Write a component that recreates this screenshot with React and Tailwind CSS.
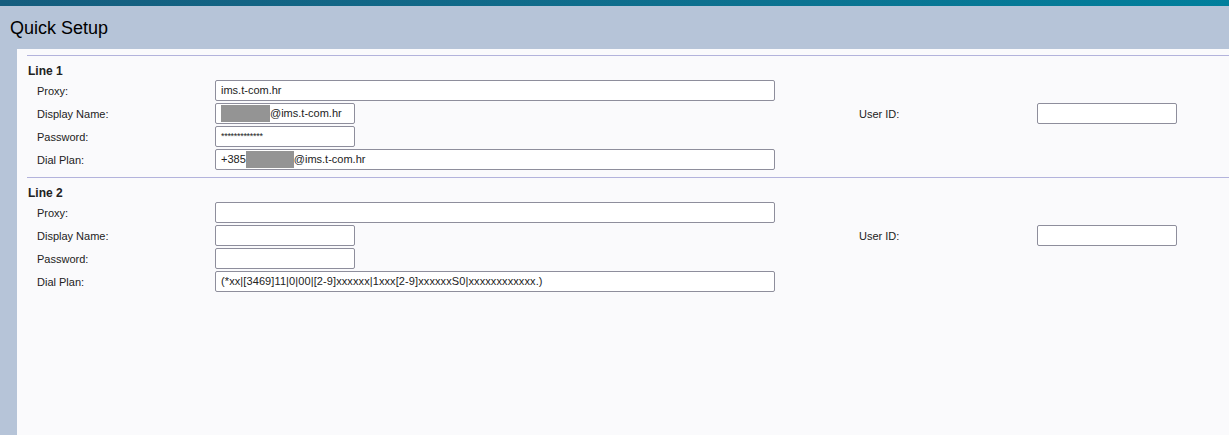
import React from "react";

const font = { fontFamily: '"Liberation Sans", Arial, sans-serif' };

function Field({ value, wide, children }) {
  return (
    <div
      className={`flex h-[21px] items-center rounded-[2px] border border-[#8e8e9c] bg-white pl-[5px] text-[11px] text-[#222] ${
        wide ? "w-[560px]" : "w-[140px]"
      }`}
    >
      {children || value}
    </div>
  );
}

function Redacted({ w }) {
  return <span className={`inline-block h-[17px] bg-[#949494] ${w}`} />;
}

function Row({ label, children, right }) {
  return (
    <div className="flex items-center">
      <div className="w-[188px] pl-[10px] pt-px text-[11px] text-[#222]">{label}</div>
      {children}
      {right && (
        <div className="ml-[504px] flex items-center">
          <div className="w-[178px] pt-px text-[11px] text-[#222]">User ID:</div>
          <Field />
        </div>
      )}
    </div>
  );
}

function Section({ title, proxy, display, password, dialPlan, last }) {
  return (
    <div className={`border-t border-[#b3b3dc] pt-[8px] ${last ? "" : "pb-[7px]"}`}>
      <div className="mb-[2px] h-[14px] pl-px text-[12px] font-bold leading-[14px] text-[#222]">{title}</div>
      <div className="flex flex-col gap-[2px]">
        <Row label="Proxy:">
          <Field wide value={proxy} />
        </Row>
        <Row label="Display Name:" right>
          <Field>{display}</Field>
        </Row>
        <Row label="Password:">
          <Field value={password} />
        </Row>
        <Row label="Dial Plan:">
          <Field wide>{dialPlan}</Field>
        </Row>
      </div>
    </div>
  );
}

export default function App() {
  return (
    <div className="h-[435px] w-full overflow-hidden bg-[#b6c4d8]" style={font}>
      <div className="h-[6px] bg-gradient-to-r from-[#155d7e] to-[#007f9c]" />
      <div className="flex h-[43px] items-center pl-[10px] pt-[2px] text-[18px] text-black">Quick Setup</div>
      <div className="ml-[17px] h-[386px] bg-[#fafafc] pl-[10px] pt-[6px]">
        <Section
          title="Line 1"
          proxy="ims.t-com.hr"
          display={
            <span className="flex items-center">
              <Redacted w="w-[49px]" />
              @ims.t-com.hr
            </span>
          }
          password={<span className="text-[9px] tracking-[-0.3px]">*************</span>}
          dialPlan={
            <span className="flex items-center">
              +385
              <Redacted w="w-[48px]" />
              @ims.t-com.hr
            </span>
          }
        />
        <Section
          title="Line 2"
          last
          dialPlan={
            <span className="tracking-[0.1px]">
              (*xx|[3469]11|0|00|[2-9]xxxxxx|1xxx[2-9]xxxxxxS0|xxxxxxxxxxxx.)
            </span>
          }
        />
      </div>
    </div>
  );
}
